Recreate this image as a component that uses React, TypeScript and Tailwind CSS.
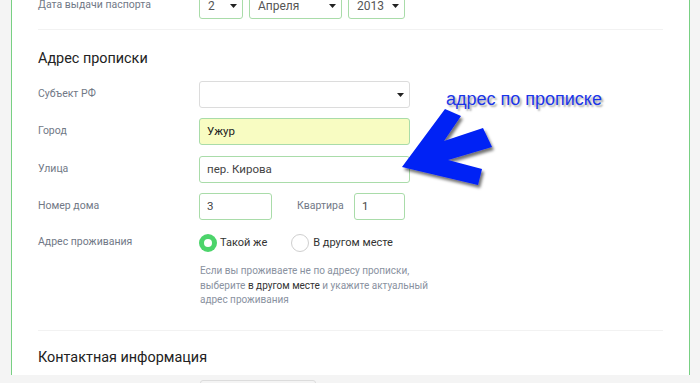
import React from 'react';

const font = { fontFamily: 'Roboto, "Noto Sans", sans-serif' };

function Caret() {
  return (
    <svg width="7" height="4" viewBox="0 0 7 4" className="shrink-0">
      <path d="M0 0h7L3.5 4z" fill="#222" />
    </svg>
  );
}

function FakeSelect({ value, className }: { value?: string; className: string }) {
  return (
    <div
      className={`flex h-[27px] items-center justify-between rounded-[3px] border bg-white pl-[8px] pr-[5px] text-[12px] text-[#555] ${className}`}
    >
      <span>{value}</span>
      <Caret />
    </div>
  );
}

function Field({ value, className }: { value: string; className: string }) {
  return (
    <div
      className={`flex h-[27px] items-center rounded-[3px] border border-[#a9dca9] px-[7px] text-[11.5px] ${className}`}
    >
      {value}
    </div>
  );
}

function Row({ label, children, className = '' }: { label: string; children: React.ReactNode; className?: string }) {
  return (
    <div className={`flex items-center ${className}`}>
      <div className="w-[161px] shrink-0 pb-[2px] text-[10.5px] text-[#717886]">{label}</div>
      {children}
    </div>
  );
}

export default function App() {
  return (
    <div className="relative h-[383px] w-[700px] overflow-hidden bg-[#f4f4f4]" style={font}>
      <div className="ml-[11px] mr-[10px] h-full border-x border-[#78d083] bg-white pl-[26px] pr-[26px]">
        <div className="-mt-[8px]">
          <Row label="Дата выдачи паспорта">
            <div className="flex gap-[6px]">
              <FakeSelect value="2" className="w-[44px] border-[#a9dca9]" />
              <FakeSelect value="Апреля" className="w-[93px] border-[#a9dca9]" />
              <FakeSelect value="2013" className="w-[57px] border-[#a9dca9]" />
            </div>
          </Row>
        </div>

        <div className="mt-[10px] h-px bg-[#f2f2f2]" />

        <h2 className="mt-[19px] h-[20px] text-[14.4px] leading-[20px] text-[#222]">Адрес прописки</h2>

        <Row label="Субъект РФ" className="mt-[12px]">
          <FakeSelect className="w-[211px] border-[#dcdcdc]" />
        </Row>
        <Row label="Город" className="mt-[10px]">
          <Field value="Ужур" className="w-[211px] bg-[#f8fcc2] text-[#222]" />
        </Row>
        <Row label="Улица" className="mt-[11px]">
          <Field value="пер. Кирова" className="w-[211px] bg-white text-[#444]" />
        </Row>
        <Row label="Номер дома" className="mt-[10px]">
          <div className="flex items-center">
            <Field value="3" className="w-[73px] bg-white text-[#444]" />
            <span className="ml-[25px] w-[57px] pb-[2px] text-[10.5px] text-[#717886]">Квартира</span>
            <Field value="1" className="w-[51px] bg-white text-[#444]" />
          </div>
        </Row>

        <Row label="Адрес проживания" className="mt-[14px]">
          <div className="flex items-center text-[11px] text-[#333]">
            <span className="flex h-[18px] w-[18px] items-center justify-center rounded-full bg-[#4cd46b]">
              <span className="h-[8px] w-[8px] rounded-full bg-white" />
            </span>
            <span className="ml-[3px]">Такой же</span>
            <span className="ml-[24px] h-[18px] w-[18px] rounded-full border border-[#cfcfcf] bg-white" />
            <span className="ml-[4px]">В другом месте</span>
          </div>
        </Row>

        <p className="ml-[162px] mt-[12px] w-[260px] text-[10px] leading-[14.5px] text-[#8a929f]">
          Если вы проживаете не по адресу прописки,
          <br />
          выберите <span className="text-[#333]">в другом месте</span> и укажите актуальный
          <br />
          адрес проживания
        </p>

        <div className="mt-[22px] h-px bg-[#f2f2f2]" />

        <h2 className="mt-[17px] h-[20px] text-[14.4px] leading-[20px] text-[#222]">Контактная информация</h2>

        <div className="ml-[162px] mt-[12px] h-[27px] w-[116px] rounded-[3px] border border-[#dcdcdc]" />
      </div>

      <span
        className="absolute left-[446px] top-[88px] text-[18px] leading-[22px] text-[#1b35e8] [text-shadow:2px_2px_2px_rgba(0,0,0,0.35)]"
        style={{ fontFamily: '"Liberation Sans", Arial, sans-serif' }}
      >
        адрес по прописке
      </span>

      <svg className="absolute left-0 top-0" width="700" height="383" viewBox="0 0 700 383">
        <defs>
          <filter id="sh" x="-20%" y="-20%" width="140%" height="140%">
            <feDropShadow dx="2" dy="3" stdDeviation="1.5" floodColor="#000" floodOpacity="0.55" />
          </filter>
        </defs>
        <polygon
          points="402,167 445,109 461,116 444,141 483,128 492,147 448,160 482,169 478,185"
          fill="#0020f5"
          filter="url(#sh)"
        />
      </svg>
    </div>
  );
}
